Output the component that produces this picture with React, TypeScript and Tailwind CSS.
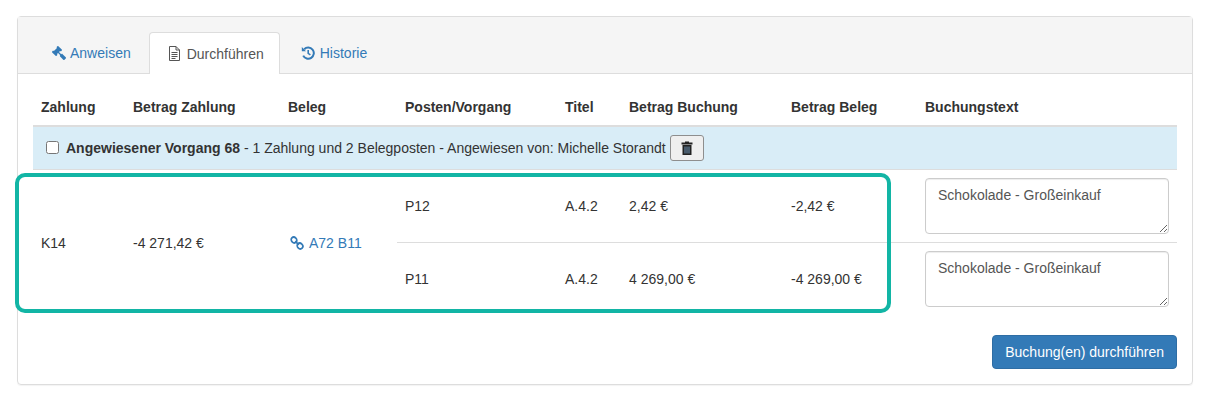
import { FaGavel } from "react-icons/fa";

const rows = [
  { posten: "P12", titel: "A.4.2", buchung: "2,42 €", beleg: "-2,42 €" },
  { posten: "P11", titel: "A.4.2", buchung: "4 269,00 €", beleg: "-4 269,00 €" },
];

const headers = [
  { label: "Zahlung", width: "w-[92px]" },
  { label: "Betrag Zahlung", width: "w-[155px]" },
  { label: "Beleg", width: "w-[117px]" },
  { label: "Posten/Vorgang", width: "w-[160px]" },
  { label: "Titel", width: "w-[64px]" },
  { label: "Betrag Buchung", width: "w-[162px]" },
  { label: "Betrag Beleg", width: "w-[134px]" },
  { label: "Buchungstext", width: "" },
];

function FileIcon() {
  return (
    <svg viewBox="0 0 13 15" className="h-[15px] w-[13px]" fill="none" stroke="currentColor">
      <path d="M1.5 .5h6.5l3.5 3.5v10.5h-10z" />
      <path d="M8 .5v3.5h3.5" />
      <path d="M3.5 6.5h6M3.5 8.5h6M3.5 10.5h6M3.5 12.5h4" />
    </svg>
  );
}

function HistoryIcon() {
  return (
    <svg viewBox="0 0 14 14" className="size-[14px]" fill="none" stroke="currentColor" strokeWidth="2">
      <path d="M3.2 3.2a5.6 5.6 0 1 1-1 6.4" />
      <path d="M.8 1v4.2h4.2z" fill="currentColor" stroke="none" />
      <path d="M7.2 4v3.4l2.2 1.4" strokeWidth="1.6" />
    </svg>
  );
}

function LinkIcon() {
  return (
    <svg viewBox="0 0 14 14" className="size-[14px]" fill="none" stroke="currentColor" strokeWidth="1.7">
      <ellipse cx="4" cy="4" rx="3" ry="2.6" transform="rotate(45 4 4)" />
      <ellipse cx="10" cy="10" rx="3" ry="2.6" transform="rotate(45 10 10)" />
      <path d="M5.2 5.2l3.6 3.6" />
    </svg>
  );
}

function TrashIcon() {
  return (
    <svg viewBox="0 0 12 14" className="h-[14px] w-[12px]">
      <path d="M4 1.5v-1h4v1h3.5v2H.5v-2z" fill="#222" />
      <path d="M1.5 4h9v10h-9z" fill="#222" />
      <path d="M3.5 5.5h1v7h-1zM5.5 5.5h1v7h-1zM7.5 5.5h1v7h-1z" fill="#6d93b5" />
    </svg>
  );
}

export default function App() {
  return (
    <div className="relative h-[402px] w-[1210px] overflow-hidden bg-white pt-4 pl-[17px] font-['Liberation_Sans',Arial,sans-serif] text-sm leading-5 text-[#333]">
      <div className="h-[369px] w-[1176px] rounded-[4px] border border-[#ddd] shadow-[0_1px_1px_rgba(0,0,0,0.05)]">
        <div className="flex h-[57px] items-end gap-[2px] border-b border-[#ddd] bg-[#f5f5f5] pl-[15px]">
          <a className="-mb-px flex h-[42px] items-center gap-[4px] pr-4 pl-[19px] text-[#337ab7]">
            <FaGavel className="size-[14px] -scale-x-100" />
            Anweisen
          </a>
          <a className="-mb-px flex h-[42px] items-center gap-[6px] rounded-t-[4px] border border-b-0 border-[#ddd] bg-white pr-[15px] pl-[18px] text-[#555]">
            <FileIcon />
            Durchführen
          </a>
          <a className="-mb-px flex h-[42px] items-center gap-[5px] pr-4 pl-[19px] text-[#337ab7]">
            <HistoryIcon />
            Historie
          </a>
        </div>

        <div className="px-[15px] pt-[15px]">
          <table className="w-[1144px] table-fixed border-collapse">
            <thead>
              <tr className="border-b-2 border-[#ddd]">
                {headers.map((h) => (
                  <th key={h.label} className={`${h.width} h-[37px] px-2 pt-0 pb-2 text-left align-bottom font-bold`}>
                    {h.label}
                  </th>
                ))}
              </tr>
            </thead>
            <tbody>
              <tr className="border-b border-[#ddd] bg-[#d9edf7]">
                <td colSpan={8} className="h-[43px] pl-[13px] align-middle">
                  <div className="flex items-center">
                    <input type="checkbox" className="mr-[7px] size-[13px]" />
                    <span>
                      <b>Angewiesener Vorgang 68</b> - 1 Zahlung und 2 Belegposten - Angewiesen von: Michelle Storandt
                    </span>
                    <button className="ml-1 flex h-[26px] w-[34px] items-center justify-center rounded-[3px] border border-[#8e8e8e] bg-[#efefef]">
                      <TrashIcon />
                    </button>
                  </div>
                </td>
              </tr>
              {rows.map((row, i) => (
                <tr key={row.posten} className={i === 0 ? "border-b border-[#ddd]" : ""}>
                  {i === 0 && (
                    <>
                      <td rowSpan={2} className="px-2 pt-[2px] align-middle">K14</td>
                      <td rowSpan={2} className="px-2 pt-[2px] align-middle">-4 271,42 €</td>
                      <td rowSpan={2} className="px-2 pt-[2px] align-middle">
                        <a className="ml-[2px] flex items-center gap-[5px] text-[#337ab7]">
                          <LinkIcon />
                          A72 B11
                        </a>
                      </td>
                    </>
                  )}
                  <td className="px-2 align-middle">{row.posten}</td>
                  <td className="px-2 align-middle">{row.titel}</td>
                  <td className="px-2 align-middle">{row.buchung}</td>
                  <td className="px-2 align-middle">{row.beleg}</td>
                  <td className="h-[73px] px-2 align-middle">
                    <textarea
                      defaultValue="Schokolade - Großeinkauf"
                      className="block h-14 w-full rounded-[4px] border border-[#ccc] px-3 py-[6px] text-[#555] shadow-[inset_0_1px_1px_rgba(0,0,0,0.075)]"
                    />
                  </td>
                </tr>
              ))}
            </tbody>
          </table>
          <div className="mt-5 flex justify-end">
            <button className="h-[34px] rounded-[4px] border border-[#2e6da4] bg-[#337ab7] px-3 text-white">
              Buchung(en) durchführen
            </button>
          </div>
        </div>
      </div>

      <div className="absolute top-[173px] left-[15px] h-[140px] w-[876px] rounded-[10px] border-4 border-[#12b5a5]" />
    </div>
  );
}
